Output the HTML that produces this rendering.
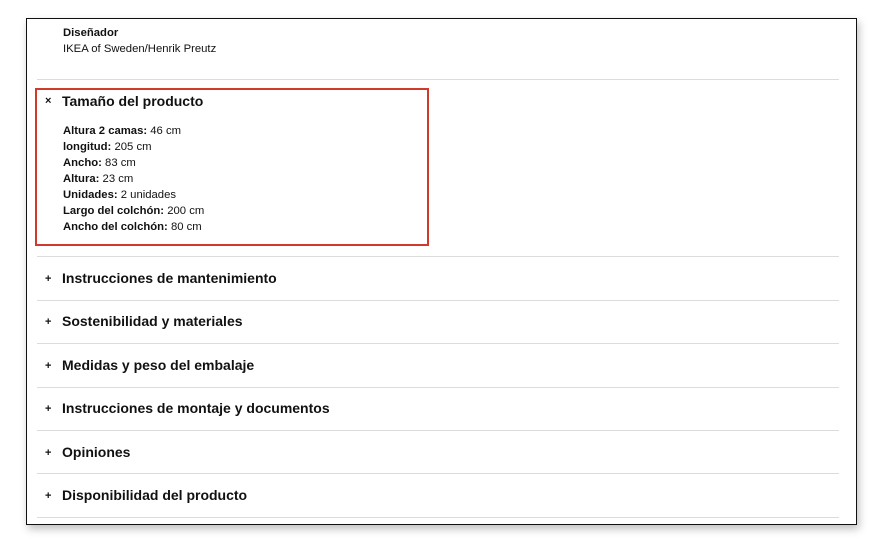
<html><head><style>
body{margin:0;width:883px;height:547px;background:#fff;font-family:"Liberation Sans",sans-serif;color:#111;position:relative;overflow:hidden}
.frame{position:absolute;left:26px;top:18px;width:829px;height:505px;border:1px solid #111;box-shadow:2px 4px 8px rgba(0,0,0,.25);background:#fff}
.l{position:absolute;left:37px;width:802px;height:1px;background:#dcdcdc}
.t{position:absolute;white-space:nowrap}
.h{font-size:14px;font-weight:bold;left:62px}
.s{font-size:11px;left:45px;font-weight:bold}
.d{font-size:11.3px;left:63px;line-height:16px}
</style></head><body>
<div class="frame"></div>
<div class="t d" style="top:25px"><b>Diseñador</b><br>IKEA of Sweden/Henrik Preutz</div>
<div class="l" style="top:79px"></div>
<div style="position:absolute;left:35px;top:88px;width:390px;height:154px;border:2px solid #d03a2a"></div>
<div class="t s" style="top:95px">×</div>
<div class="t h" style="top:93px">Tamaño del producto</div>
<div class="t d" style="top:123px"><b>Altura 2 camas:</b> 46 cm<br><b>longitud:</b> 205 cm<br><b>Ancho:</b> 83 cm<br><b>Altura:</b> 23 cm<br><b>Unidades:</b> 2 unidades<br><b>Largo del colchón:</b> 200 cm<br><b>Ancho del colchón:</b> 80 cm</div>
<div class="l" style="top:256px"></div>
<div class="t s" style="top:273px">+</div><div class="t h" style="top:270px">Instrucciones de mantenimiento</div>
<div class="l" style="top:300px"></div>
<div class="t s" style="top:316px">+</div><div class="t h" style="top:313px">Sostenibilidad y materiales</div>
<div class="l" style="top:343px"></div>
<div class="t s" style="top:360px">+</div><div class="t h" style="top:357px">Medidas y peso del embalaje</div>
<div class="l" style="top:387px"></div>
<div class="t s" style="top:403px">+</div><div class="t h" style="top:400px">Instrucciones de montaje y documentos</div>
<div class="l" style="top:430px"></div>
<div class="t s" style="top:447px">+</div><div class="t h" style="top:444px">Opiniones</div>
<div class="l" style="top:473px"></div>
<div class="t s" style="top:490px">+</div><div class="t h" style="top:487px">Disponibilidad del producto</div>
<div class="l" style="top:517px"></div>
</body></html>
